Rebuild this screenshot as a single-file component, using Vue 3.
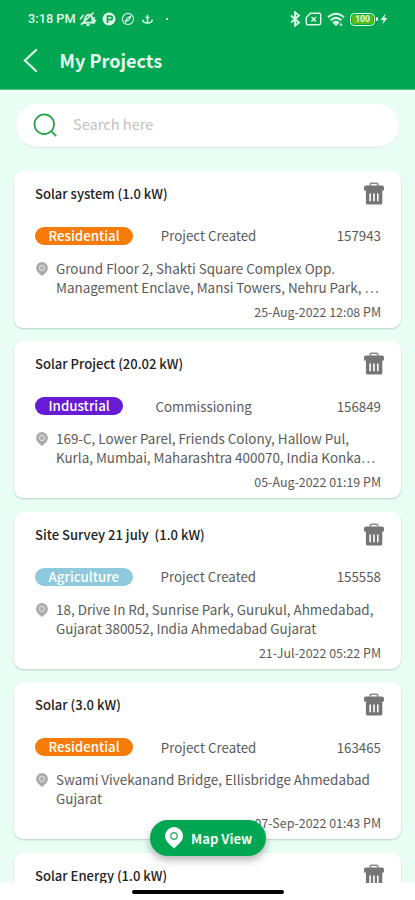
<script setup>
const projects = [
  { name: 'Solar system (1.0 kW)', type: 'Residential', kind: 'residential', status: 'Project Created', id: '157943', address: ['Ground Floor 2, Shakti Square Complex Opp.', 'Management Enclave, Mansi Towers, Nehru Park, …'], date: '25-Aug-2022 12:08 PM' },
  { name: 'Solar Project (20.02 kW)', type: 'Industrial', kind: 'industrial', status: 'Commissioning', id: '156849', address: ['169-C, Lower Parel, Friends Colony, Hallow Pul,', 'Kurla, Mumbai, Maharashtra 400070, India Konka…'], date: '05-Aug-2022 01:19 PM' },
  { name: 'Site Survey 21 july  (1.0 kW)', type: 'Agriculture', kind: 'agriculture', status: 'Project Created', id: '155558', address: ['18, Drive In Rd, Sunrise Park, Gurukul, Ahmedabad,', 'Gujarat 380052, India Ahmedabad Gujarat'], date: '21-Jul-2022 05:22 PM' },
  { name: 'Solar (3.0 kW)', type: 'Residential', kind: 'residential', status: 'Project Created', id: '163465', address: ['Swami Vivekanand Bridge, Ellisbridge Ahmedabad', 'Gujarat'], date: '07-Sep-2022 01:43 PM' },
  { name: 'Solar Energy (1.0 kW)' },
]
</script>

<template>
  <div class="screen">
    <header class="header">
      <div class="status">
        <span class="clock">3:18 PM</span>
        <svg class="ic bell" viewBox="0 0 18 16">
          <path d="M4 12c2-1.500 1.500-5 3.500-7.300 2-1.900 5-1 5.500 1.500.5 2.500-.5 3.800 1.500 5.300zM7.500 14h3" fill="none" stroke="currentColor" stroke-width="1.800" />
          <path d="M2 14 14.500 1.500M1 8.500l3.500-4.500M13.500 12.500l3.500-3.500M15 6v4" stroke="currentColor" stroke-width="1.600" />
        </svg>
        <svg class="ic parking" viewBox="0 0 14 14">
          <circle cx="7" cy="7" r="6.500" fill="currentColor" />
          <path d="M5.500 11V4.200h3a1.700 1.700 0 0 1 0 3.500h-3" fill="none" stroke="#00a651" stroke-width="1.700" />
        </svg>
        <svg class="ic compass" viewBox="0 0 14 14">
          <circle cx="7" cy="7" r="5.600" fill="none" stroke="currentColor" stroke-width="1.100" />
          <path d="M10 4 8.200 8.200 4 10l1.800-4.200zM4 10l6-6" fill="none" stroke="currentColor" stroke-width="1" />
        </svg>
        <svg class="ic anchor" viewBox="0 0 14 14">
          <path d="M7 2.500V11M5 5.500h4M1.800 7.500c.5 5.200 9.900 5.200 10.400 0" fill="none" stroke="currentColor" stroke-width="1.600" />
        </svg>
        <span class="dot"></span>
        <span class="grow"></span>
        <svg class="ic bluetooth" viewBox="0 0 12 16">
          <path d="m2 4.500 8 7-4 3.300V1.200l4 3.300-8 7" fill="none" stroke="currentColor" stroke-width="1.800" />
        </svg>
        <svg class="ic sim" viewBox="0 0 17 14">
          <path d="M5.500 1.200H14q1.700 0 1.700 1.700v8.200q0 1.700-1.700 1.700H3q-1.700 0-1.700-1.700V5.500z" fill="none" stroke="currentColor" stroke-width="1.500" />
          <path d="m6.500 5 4.500 4.500M11 5 6.500 9.500" stroke="currentColor" stroke-width="1.500" />
        </svg>
        <svg class="ic wifi" viewBox="0 0 18 15">
          <path d="M1 5.300q8-7 16 0M3.600 8.300q5.400-4.800 10.800 0M6.200 11q2.800-2.400 5.600 0" fill="none" stroke="currentColor" stroke-width="2" />
          <path d="m6.500 11.200 2.500 2.600 2.500-2.600zM14 10v4M12.500 12.500l1.500 1.500 1.500-1.500" fill="currentColor" stroke="currentColor" stroke-width=".6" />
        </svg>
        <span class="battery"><span class="level">100</span></span>
        <svg class="ic bolt" viewBox="0 0 8 12"><path d="M5.500.5.5 7h3l-1.200 4.500L7.500 5h-3z" fill="currentColor" /></svg>
      </div>
      <div class="bar">
        <svg class="back" viewBox="0 0 16 26"><path d="M14 1.800 2 13l12 11.200" fill="none" stroke="currentColor" stroke-width="2.300" stroke-linecap="round" /></svg>
        <h1>My Projects</h1>
      </div>
    </header>

    <main class="content">
      <div class="search">
        <svg viewBox="0 0 26 26"><circle cx="11.700" cy="11.700" r="10.200" /><path d="m19 19 5.200 5" /></svg>
        <span>Search here</span>
      </div>

      <article v-for="(p, i) in projects" :key="i" class="card">
        <div class="top">
          <h2>{{ p.name }}</h2>
          <svg class="trash" viewBox="0 0 20 24" preserveAspectRatio="none">
            <path d="M6.300 4V2.500Q6.300 1.300 7.500 1.300h5q1.200 0 1.200 1.200V4" fill="none" stroke="#8b8b8b" stroke-width="1.700" />
            <path d="M2 3.700h16q2 0 2 2v3.100h-1.700v13q0 1.700-1.700 1.700H3.600q-1.700 0-1.700-1.700v-13H0V5.700q0-2 2-2z" fill="#757575" />
            <path d="M6.200 12v8.200M10 12v8.200M13.800 12v8.200" stroke="#fff" stroke-width="1.600" />
          </svg>
        </div>
        <template v-if="p.id">
          <div class="meta">
            <span class="badge" :class="p.kind">{{ p.type }}</span>
            <span class="state">{{ p.status }}</span>
            <span class="number">{{ p.id }}</span>
          </div>
          <div class="place">
            <svg viewBox="0 0 12 14">
              <path d="M6 0a5.900 5.900 0 0 1 5.900 5.900C11.900 9.500 8.500 11.500 6 14 3.500 11.500.1 9.500.1 5.900A5.900 5.900 0 0 1 6 0z" fill="#aaa" />
              <circle cx="6" cy="5.900" r="2.800" fill="#b5b5b5" stroke="#dedede" stroke-width="1" />
            </svg>
            <p><span v-for="line in p.address" :key="line">{{ line }}</span></p>
          </div>
          <time>{{ p.date }}</time>
        </template>
      </article>
    </main>

    <footer class="home"><span></span></footer>

    <button class="map">
      <svg viewBox="0 0 18 22">
        <path d="M9 0a9 9 0 0 1 9 9c0 5.200-5 8.500-9 12.500C5 17.500 0 14.200 0 9a9 9 0 0 1 9-9z" fill="#fff" />
        <circle cx="9" cy="9" r="3.200" fill="none" stroke="#3fb171" stroke-width="1.400" />
      </svg>
      <span>Map View</span>
    </button>
  </div>
</template>

<style>
body { background: #fff; }
</style>

<style scoped>
.screen {
  position: relative;
  display: flex;
  flex-direction: column;
  width: 415px;
  height: 900px;
  overflow: hidden;
  font-family: "Noto Sans CJK SC", "Noto Sans", sans-serif;
  color: #5a5a5a;
}
.header {
  flex: none;
  box-sizing: border-box;
  height: 90px;
  background: #00a651;
  color: #e0f8e8;
  border-bottom: 1px solid #50bf83;
}
.status { display: flex; align-items: center; height: 38px; padding: 0 27px 0 28px; }
.ic { flex: none; display: block; }
.clock { width: 49px; font: 500 12.800px/16px Roboto, sans-serif; white-space: nowrap; }
.bell { width: 18px; height: 16px; margin-left: 2px; }
.parking { width: 14px; height: 14px; margin-left: 5px; }
.compass { width: 14px; height: 14px; margin-left: 5px; }
.anchor { width: 13px; height: 14px; margin-left: 6px; }
.dot { width: 2px; height: 2px; margin-left: 12px; background: #d9f7e5; }
.grow { flex: 1; }
.bluetooth { width: 12px; height: 16px; }
.sim { width: 17px; height: 14px; margin-left: 4px; }
.wifi { width: 18px; height: 15px; margin-left: 5px; }
.battery {
  position: relative;
  box-sizing: border-box;
  display: flex;
  width: 25px;
  height: 13px;
  margin-left: 5px;
  padding: 1px;
  border: 1.500px solid #dff7e4;
  border-radius: 4.500px;
}
.battery::after { content: ""; position: absolute; right: -3.500px; top: 3px; width: 2px; height: 4px; background: #dff7e4; border-radius: 1px; }
.level { flex: 1; background: #55bd15; border-radius: 2px; font: 700 8.500px/9px Roboto, sans-serif; text-align: center; }
.bolt { width: 8px; height: 12px; margin-left: 5px; }
.bar { display: flex; align-items: center; height: 44px; padding-left: 23px; }
.back { width: 15px; height: 25px; }
h1 { margin: 0 0 0 21.500px; font-size: 18.100px; line-height: 30px; font-weight: 700; color: #e6fbed; white-space: nowrap; }
.content {
  flex: none;
  box-sizing: border-box;
  display: flex;
  flex-direction: column;
  gap: 13.500px;
  height: 793px;
  padding: 14px 14px 0;
  overflow: hidden;
  background: #e9fff5;
}
.search {
  flex: none;
  display: flex;
  align-items: center;
  height: 43px;
  margin: 0 2px 10px;
  padding-left: 17px;
  border-radius: 22px;
  background: #fff;
  box-shadow: 0 1px 1px rgba(90, 70, 60, .1);
  font-size: 14.600px;
  line-height: 20px;
  color: #c2c2c2;
}
.search span { margin-top: -3px; }
.search svg { width: 25px; height: 25px; margin-right: 15px; fill: none; stroke: #25a34a; stroke-width: 1.800; }
.card {
  flex: none;
  box-sizing: border-box;
  display: flex;
  flex-direction: column;
  height: 157px;
  padding: 11px 20px 0 21px;
  border-radius: 9px;
  background: #fff;
  box-shadow: 0 1px 2px rgba(50, 90, 70, .28);
}
.top { display: flex; justify-content: space-between; align-items: flex-start; height: 24px; margin-right: -3px; }
h2 { margin: 2px 0 0; font-size: 13.050px; line-height: 20px; font-weight: 500; color: #222; white-space: pre; }
.trash { width: 20px; height: 23px; }
.meta { display: flex; justify-content: space-between; align-items: center; height: 19px; margin-top: 20.500px; font-size: 13.300px; line-height: 19px; white-space: nowrap; }
.badge { height: 18px; padding: 0 13.500px; border-radius: 9px; line-height: 18px; font-weight: 500; color: #fff; }
.residential { background: #f77b08; }
.industrial { background: #671bd5; }
.agriculture { background: #8ecadb; }
.number { width: 97px; text-align: right; }
.place { display: flex; height: 38px; margin-top: 13.500px; font-size: 13.450px; line-height: 19px; white-space: nowrap; }
.place svg { flex: none; width: 12px; height: 14px; margin: 3px 8px 0 1px; }
.place p { margin: 0; }
.place p span { display: block; }
time { margin-top: 6px; font-size: 12.450px; line-height: 18px; text-align: right; }
.home { flex: 1; display: flex; justify-content: center; align-items: flex-start; padding-top: 7px; background: #fff; }
.home span { width: 152px; height: 4px; border-radius: 2px; background: #050505; }
.map {
  position: absolute;
  left: 150px;
  top: 820px;
  box-sizing: border-box;
  display: flex;
  align-items: center;
  width: 116px;
  height: 36px;
  padding: 0 0 0 15px;
  border: 0;
  border-radius: 18px;
  background: #00a651;
  box-shadow: 0 4px 8px rgba(0, 0, 0, .3);
  color: #f3fff7;
  font-family: inherit;
  font-size: 13.100px;
  font-weight: 700;
  white-space: nowrap;
}
.map svg { flex: none; width: 18px; height: 22px; margin-right: 8px; }
</style>
